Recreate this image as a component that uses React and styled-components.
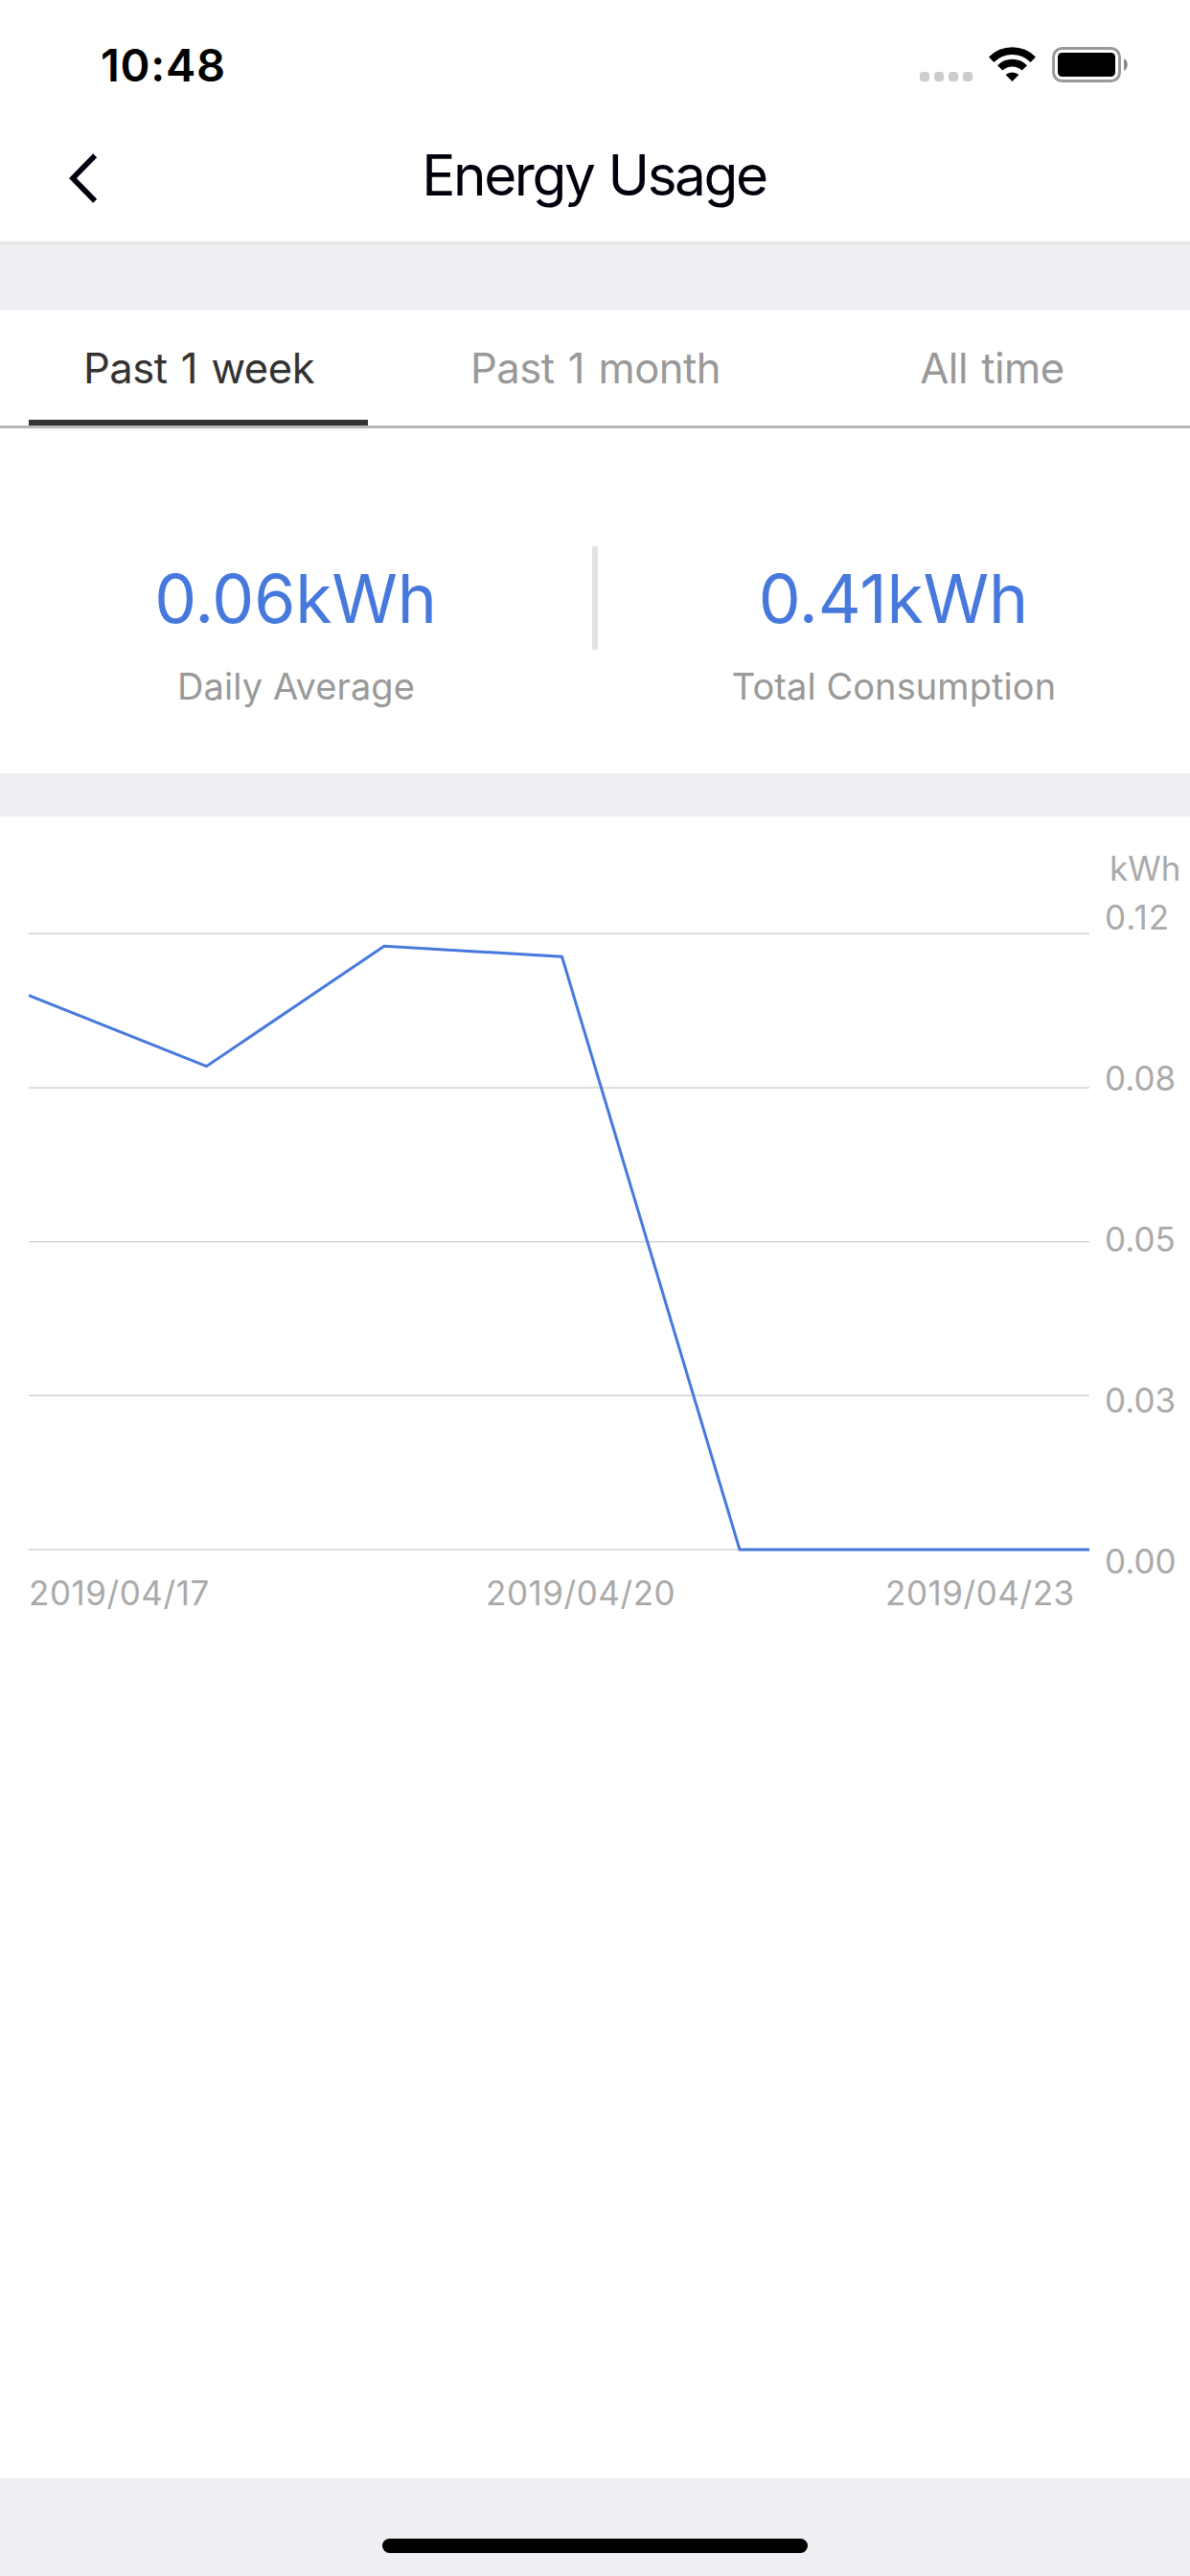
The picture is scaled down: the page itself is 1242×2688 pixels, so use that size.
import React, { useState } from "react";
import styled, { createGlobalStyle } from "styled-components";

const GlobalStyle = createGlobalStyle`
    body {
        margin: 0;
        background-color: #fff;
        font-family: Inter, "Liberation Sans", sans-serif;
    }

    * {
        box-sizing: border-box;
    }
`

const Screen = styled.div`
    display: flex;
    flex-direction: column;
    width: 1242px;
    height: 2688px;
    overflow: hidden;
    background-color: #fff;
`

const StatusBar = styled.div`
    display: flex;
    justify-content: space-between;
    height: 132px;
    padding: 0 65px 0 105px;
`

const Time = styled.span`
    font-size: 47px;
    font-weight: 600;
    line-height: 136px;
    letter-spacing: 0.7px;
    color: #000;
`

const StatusIcons = styled.div`
    display: flex;
    align-items: flex-start;
    padding-top: 49px;

    .signal {
        margin: 26px 17px 0 0;
    }

    .wifi {
        margin-right: 17px;
    }
`

const NavBar = styled.div`
    display: grid;
    grid-template-columns: 180px 1fr 180px;
    align-items: center;
    height: 123px;
    padding-bottom: 18px;
    border-bottom: 3px solid #e5e5e5;
`

const BackButton = styled.button`
    display: flex;
    margin: 5px 0 0 70px;
    padding: 0;
    border: none;
    background: none;
    cursor: pointer;
`

const Title = styled.h1`
    margin: 0;
    padding-right: 2px;
    font-size: 58.5px;
    font-weight: 400;
    line-height: 80px;
    letter-spacing: -2.4px;
    word-spacing: 1px;
    text-align: center;
    color: #00000c;
`

const Spacer = styled.div`
    height: ${props => props.$height}px;
    background-color: #efeef3;
`

const Tabs = styled.div`
    display: grid;
    grid-template-columns: repeat(3, 354px);
    column-gap: 60px;
    height: 123px;
    padding: 0 30px;
    border-bottom: 3px solid #b8b8b8;
`

const Tab = styled.button`
    height: 120px;
    padding: 6px 0 0 1px;
    border: none;
    border-bottom: 6px solid ${props => props.$active ? "#333" : "transparent"};
    background: none;
    font-family: inherit;
    font-size: 43.6px;
    letter-spacing: -0.5px;
    word-spacing: 2.6px;
    white-space: nowrap;
    color: ${props => props.$active ? "#333" : "#999"};
    cursor: pointer;
`

const Stats = styled.div`
    display: flex;
    height: 360px;
    padding-top: 123px;
`

const Stat = styled.div`
    flex: 1;
    text-align: center;
`

const Value = styled.div`
    padding-right: 1px;
    font-size: 69.7px;
    line-height: 110px;
    letter-spacing: -0.15px;
    color: #4779dd;
`

const Label = styled.div`
    font-size: 38px;
    line-height: 72px;
    letter-spacing: 0.07px;
    color: #999;
`

const Divider = styled.div`
    width: 6px;
    height: 108px;
    background-color: #e2e2e2;
`

const Chart = styled.div`
    display: flex;
    flex: 1;
    padding-left: 30px;
    font-size: 35px;
    line-height: 51px;
    color: #aaa;
`

const Plot = styled.div`
    width: 1107px;
    padding-top: 108px;

    svg {
        display: block;
    }
`

const Dates = styled.div`
    display: grid;
    grid-template-columns: 477px 417px auto;
    letter-spacing: 0.55px;
    white-space: nowrap;
`

const Axis = styled.div`
    display: flex;
    flex-direction: column;
    padding: 29px 0 0 16px;
`

const Unit = styled.span`
    padding-left: 5px;
`

const Ticks = styled.div`
    display: flex;
    flex-direction: column;
    gap: 117px;

    span:first-child {
        letter-spacing: 1.1px;
    }
`

const HomeArea = styled.div`
    display: flex;
    justify-content: center;
    height: 102px;
    padding-top: 63px;
    background-color: #efeef3;
`

const HomeBar = styled.div`
    width: 444px;
    height: 15px;
    border-radius: 8px;
    background-color: #000;
`

const PLOT_TOP = 14.25;
const PLOT_BOTTOM = 657;
const STEP_X = 185.5;

const tabs = ["Past 1 week", "Past 1 month", "All time"];
const ticks = ["0.12", "0.08", "0.05", "0.03", "0.00"];
const dates = ["2019/04/17", "2019/04/20", "2019/04/23"];
// share of the plot height for each day
const usage = [0.8998, 0.7847, 0.9798, 0.9627, 0, 0, 0];

function SignalIcon() {
    return (
        <svg className="signal" width="55" height="10" fill="#ccc">
            {[0, 15, 30, 45].map(x => <rect key={x} x={x} width="10" height="10" rx="3.4" />)}
        </svg>
    )
}

function WifiIcon() {
    return (
        <svg className="wifi" width="49" height="37" fill="none" stroke="#000" strokeWidth="7.6">
            <path d="M2.7 13.2A30.7 30.7 0 0 1 46.3 13.2" />
            <path d="M11.7 21.9A18.1 18.1 0 0 1 37.3 21.9" />
            <path d="M24.5 36L17.6 29.1A10.6 10.6 0 0 1 31.4 29.1Z" fill="#000" stroke="none" />
        </svg>
    )
}

function BatteryIcon() {
    return (
        <svg width="79" height="37">
            <rect x="1.5" y="1.5" width="69" height="34" rx="9" fill="none" stroke="#999" strokeWidth="3" />
            <rect x="6" y="6" width="60" height="25" rx="4.5" fill="#000" />
            <path d="M75 12C80 14.5 80 22.5 75 25Z" fill="#888" />
        </svg>
    )
}

function UsageChart() {
    const height = PLOT_BOTTOM - PLOT_TOP;
    const points = usage.map((share, i) => `${i * STEP_X},${PLOT_BOTTOM - share * height}`).join(" ");

    return (
        <svg width="1107" height="677">
            {ticks.map((tick, i) => {
                const y = PLOT_TOP + i * height / 4;
                return <line key={tick} x1="0" x2="1107" y1={y} y2={y} stroke="#d3d3d3" strokeWidth="1.5" />
            })}
            <polyline points={points} fill="none" stroke="#4779dd" strokeWidth="3" />
        </svg>
    )
}

function App() {
    const [active, setActive] = useState(tabs[0]);

    return (
        <Screen>
            <GlobalStyle />
            <StatusBar>
                <Time>10:48</Time>
                <StatusIcons>
                    <SignalIcon />
                    <WifiIcon />
                    <BatteryIcon />
                </StatusIcons>
            </StatusBar>
            <NavBar>
                <BackButton aria-label="Back">
                    <svg width="34" height="54" fill="none" stroke="#00000c" strokeWidth="5.6">
                        <path d="M29.2 3.2L6 27L29.2 50.8" />
                    </svg>
                </BackButton>
                <Title>Energy Usage</Title>
            </NavBar>
            <Spacer $height={69} />
            <Tabs>
                {tabs.map(tab => (
                    <Tab key={tab} $active={tab === active} onClick={() => setActive(tab)}>{tab}</Tab>
                ))}
            </Tabs>
            <Stats>
                <Stat>
                    <Value>0.06kWh</Value>
                    <Label>Daily Average</Label>
                </Stat>
                <Divider />
                <Stat>
                    <Value>0.41kWh</Value>
                    <Label>Total Consumption</Label>
                </Stat>
            </Stats>
            <Spacer $height={45} />
            <Chart>
                <Plot>
                    <UsageChart />
                    <Dates>
                        {dates.map(date => <span key={date}>{date}</span>)}
                    </Dates>
                </Plot>
                <Axis>
                    <Unit>kWh</Unit>
                    <Ticks>
                        {ticks.map(tick => <span key={tick}>{tick}</span>)}
                    </Ticks>
                </Axis>
            </Chart>
            <HomeArea>
                <HomeBar />
            </HomeArea>
        </Screen>
    )
}

export default App;
